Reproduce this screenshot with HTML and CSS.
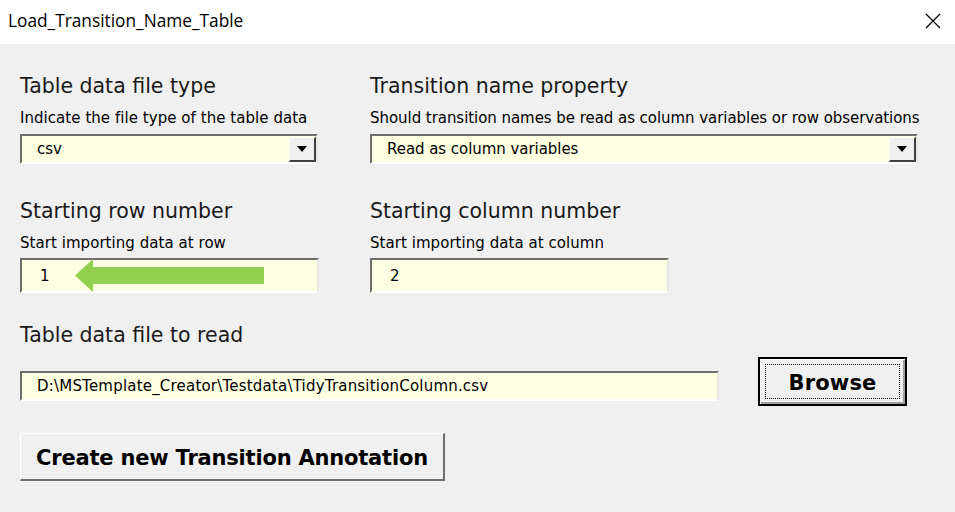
FILE: index.html
```html
<!DOCTYPE html>
<html>
<head>
<meta charset="utf-8">
<link rel="stylesheet" href="styles.css">
</head>
<body>
<div class="window">
  <div class="titlebar">
    <span class="title">Load_Transition_Name_Table</span>
    <svg class="close" width="16" height="16" viewBox="0 0 16 16"><path d="M1 1L15 15M15 1L1 15" stroke="#000" stroke-width="1.3"/></svg>
  </div>
  <div class="content">
    <div class="row">
      <div class="field left">
        <div class="heading">Table data file type</div>
        <div class="sub">Indicate the file type of the table data</div>
        <div class="combo combo-left">
          <span class="value">csv</span>
          <span class="dropbtn"><svg width="10" height="6" viewBox="0 0 10 6"><path d="M0 0H10L5 6Z" fill="#000"/></svg></span>
        </div>
      </div>
      <div class="field">
        <div class="heading">Transition name property</div>
        <div class="sub sub-right">Should transition names be read as column variables or row observations</div>
        <div class="combo combo-right">
          <span class="value">Read as column variables</span>
          <span class="dropbtn"><svg width="10" height="6" viewBox="0 0 10 6"><path d="M0 0H10L5 6Z" fill="#000"/></svg></span>
        </div>
      </div>
    </div>
    <div class="row row2">
      <div class="field left">
        <div class="heading">Starting row number</div>
        <div class="sub">Start importing data at row</div>
        <div class="textbox num">
          <span class="value">1</span>
          <svg class="arrow" width="250" height="36" viewBox="0 0 250 36"><path d="M55 17.5L73 1V9H244V26H73V34Z" fill="#92d050"/></svg>
        </div>
      </div>
      <div class="field">
        <div class="heading">Starting column number</div>
        <div class="sub">Start importing data at column</div>
        <div class="textbox num">
          <span class="value">2</span>
        </div>
      </div>
    </div>
    <div class="heading h3">Table data file to read</div>
    <div class="pathrow">
      <div class="textbox path"><span class="value">D:\MSTemplate_Creator\Testdata\TidyTransitionColumn.csv</span></div>
      <button class="browse"><span class="focus">Browse</span></button>
    </div>
    <button class="create">Create new Transition Annotation</button>
  </div>
</div>
</body>
</html>
```
FILE: styles.css
```css
* { box-sizing: border-box; }
html, body { margin: 0; padding: 0; }
body {
  width: 955px;
  height: 512px;
  background: #f0f0f0;
  font-family: "DejaVu Sans", Verdana, sans-serif;
  color: #000;
  overflow: hidden;
}
.titlebar {
  height: 44px;
  background: #fff;
  display: flex;
  align-items: center;
  justify-content: space-between;
  padding: 0 14px 3px 8px;
}
.title {
  font-family: "Open Sans", "Noto Sans", sans-serif;
  font-size: 17.3px;
  letter-spacing: 0;
}
.close { margin-top: 1px; }
.content {
  padding: 27px 0 0 20px;
}
.row {
  display: flex;
}
.row2 { margin-top: 32px; }
.field.left { width: 350px; }
.heading {
  height: 30px;
  line-height: 30px;
  font-size: 20.5px;
  letter-spacing: 0;
  color: #1a1a1a;
}
.sub {
  margin-top: 7px;
  height: 20px;
  line-height: 21px;
  font-size: 15px;
  letter-spacing: 0.05px;
}
.sub-right { letter-spacing: -0.05px; }
.combo, .textbox {
  position: relative;
  background: #ffffe1;
  border-top: 2px solid #6d6d6d;
  border-left: 2px solid #6d6d6d;
  border-right: 2px solid #e6e6e6;
  border-bottom: 2px solid #fff;
  display: flex;
  align-items: center;
  font-size: 15px;
  letter-spacing: -0.05px;
}
.combo {
  margin-top: 6px;
  height: 30px;
  padding-left: 15px;
}
.combo-left { width: 298px; }
.combo-right { width: 548px; }
.dropbtn {
  position: absolute;
  right: 0;
  top: 1px;
  width: 27px;
  height: 25px;
  background: #f0f0f0;
  border-top: 1px solid #fff;
  border-left: 1px solid #fff;
  border-right: 2px solid #404040;
  border-bottom: 2px solid #404040;
  display: flex;
  align-items: center;
  justify-content: center;
}
.textbox.num {
  margin-top: 5px;
  width: 299px;
  height: 35px;
  padding-left: 18px;
}
.arrow {
  position: absolute;
  left: -2px;
  top: -2px;
}
.h3 { margin-top: 27px; }
.pathrow {
  display: flex;
  align-items: flex-start;
}
.textbox.path {
  margin-top: 21px;
  width: 699px;
  height: 30px;
  padding-left: 15px;
  letter-spacing: 0.2px;
}
.browse {
  margin: 7px 0 0 39px;
  width: 149px;
  height: 49px;
  background: #f0f0f0;
  border: 2px solid #000;
  box-shadow: inset 1px 1px 0 #fff, inset -2px -2px 0 #a0a0a0;
  padding: 5px;
  font-family: "DejaVu Sans", Verdana, sans-serif;
  font-weight: bold;
  font-size: 21px;
  letter-spacing: 0.2px;
  color: #000;
  display: flex;
}
.browse .focus {
  flex: 1;
  border: 1px dotted #000;
  display: flex;
  align-items: center;
  justify-content: center;
  padding-top: 2px;
}
.create {
  display: block;
  margin-top: 27px;
  width: 425px;
  height: 48px;
  background: #f0f0f0;
  border-top: 1px solid #fff;
  border-left: 1px solid #fff;
  border-right: 2px solid #6d6d6d;
  border-bottom: 2px solid #6d6d6d;
  font-family: "DejaVu Sans", Verdana, sans-serif;
  font-weight: bold;
  font-size: 21px;
  letter-spacing: -0.2px;
  color: #000;
  padding: 3px 0 0 0;
}
```
